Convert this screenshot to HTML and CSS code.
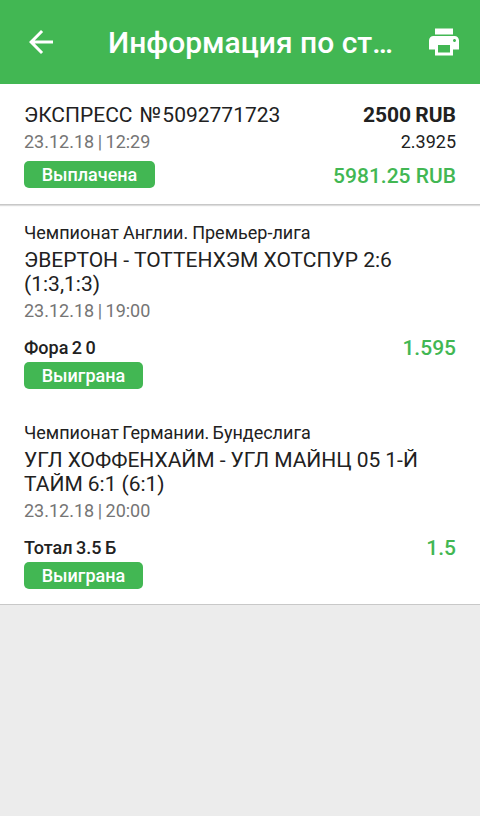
FILE: index.html
```html
<!DOCTYPE html>
<html lang="ru">
<head>
<meta charset="utf-8">
<title>Информация по ставке</title>
<link rel="stylesheet" href="styles.css">
</head>
<body>
<header class="bar">
  <svg class="back" viewBox="0 0 24 24"><path d="M20 11H7.83l5.59-5.59L12 4l-8 8 8 8 1.41-1.41L7.83 13H20v-2z"/></svg>
  <h1 class="title">Информация по ст<span class="dots">...</span></h1>
  <svg class="print" viewBox="0 0 24 24"><path d="M19 8H5c-1.66 0-3 1.34-3 3v6h4v4h12v-4h4v-6c0-1.66-1.34-3-3-3zm-3 11H8v-5h8v5zm3-7c-.55 0-1-.45-1-1s.45-1 1-1 1 .45 1 1-.45 1-1 1zm-1-9H6v4h12V3z"/></svg>
</header>
<section class="summary">
  <div class="row name"><span>ЭКСПРЕСС <span class="num">№</span>5092771723</span><b class="stake">2500 RUB</b></div>
  <div class="row meta"><span class="date">23.12.18 | 12:29</span><span class="odds">2.3925</span></div>
  <div class="row status"><span class="badge paid">Выплачена</span><b class="win">5981.25 RUB</b></div>
</section>
<main class="events">
  <article class="event">
    <div class="league">Чемпионат Англии. Премьер-лига</div>
    <div class="match">ЭВЕРТОН - ТОТТЕНХЭМ ХОТСПУР 2:6<br>(1:3,1:3)</div>
    <div class="date">23.12.18 | 19:00</div>
    <div class="row pick"><b>Фора 2 0</b><b class="win">1.595</b></div>
    <span class="badge">Выиграна</span>
  </article>
  <article class="event">
    <div class="league narrow">Чемпионат Германии. Бундеслига</div>
    <div class="match tight">УГЛ ХОФФЕНХАЙМ - УГЛ МАЙНЦ 05 1-Й<br>ТАЙМ 6:1 (6:1)</div>
    <div class="date">23.12.18 | 20:00</div>
    <div class="row pick"><b>Тотал 3.5 Б</b><b class="win">1.5</b></div>
    <span class="badge">Выиграна</span>
  </article>
</main>
</body>
</html>
```
FILE: styles.css
```css
* { box-sizing: border-box; }
body { margin: 0; background: #ececec; font-family: Roboto, sans-serif; color: #212121; }
b { font-weight: 500; }
.bar { height: 84px; background: #42b753; display: flex; align-items: center; padding: 0 18px 0 23px; color: #fff; }
.bar svg { fill: #fff; flex: none; }
.back { width: 36px; height: 36px; margin-right: 49px; }
.title { margin: 0; padding-top: 2px; flex: 1; font-size: 30px; font-weight: 500; line-height: 36px; white-space: nowrap; }
.dots { letter-spacing: -1.9px; }
.print { width: 36px; height: 36px; }
.summary { height: 121px; padding: 17px 24px 0; background: #fff; border-bottom: 1px solid #c8c8c8; box-shadow: 0 1px 1px #ddd; position: relative; }
.row { display: flex; justify-content: space-between; align-items: center; }
.name { height: 27px; font-size: 21px; }
.num { padding: 0 1.5px 0 1.5px; }
.meta { height: 27px; font-size: 18px; }
.status { height: 38px; }
.status .win { padding-top: 3px; }
.date { font-size: 18px; line-height: 26px; color: #757575; word-spacing: -1px; }
.stake { font-weight: 700; word-spacing: -1px; }
.win { font-size: 21px; color: #42b753; }
.badge { display: block; width: 119px; height: 27px; border-radius: 5px; background: #42b753; color: #fff; font-size: 18px; font-weight: 500; line-height: 27px; text-align: center; }
.paid { width: 131px; }
.events { height: 400px; padding-top: 15px; background: #fff; border-bottom: 1px solid #c8c8c8; }
.event { height: 200px; padding: 0 24px; }
.league { font-size: 18px; line-height: 26px; word-spacing: -0.5px; }
.narrow { word-spacing: -1.2px; }
.match { font-size: 21px; line-height: 24px; padding: 2px 0; }
.tight { word-spacing: -0.2px; }
.pick { height: 30px; margin-top: 8px; font-size: 18px; word-spacing: -1px; }
.pick .win { padding-top: 2px; }
```
